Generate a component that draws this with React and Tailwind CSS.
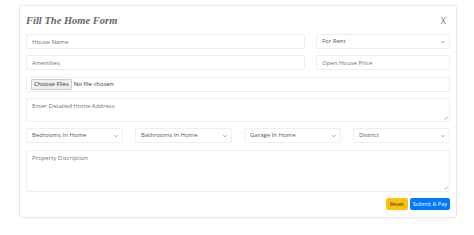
import React from 'react';

const fieldCls = 'h-[15px] w-full rounded-[2px] border border-[#eceef1] bg-white px-[5px] text-[6px] text-[#555] placeholder:text-[#6c757d] outline-none';

const Chevron = () => (
    <svg width="4" height="3" viewBox="0 0 10 6" fill="none" className="absolute right-[5px] top-1/2 -translate-y-1/2">
        <polyline points="1,1 5,5 9,1" stroke="#777" strokeWidth="1.6" strokeLinecap="round" strokeLinejoin="round"/>
    </svg>
);

const Grip = () => (
    <svg width="4" height="4" viewBox="0 0 8 8" className="absolute bottom-[2px] right-[2px]">
        <line x1="7" y1="1" x2="1" y2="7" stroke="#888" strokeWidth="1"/>
        <line x1="7" y1="4" x2="4" y2="7" stroke="#888" strokeWidth="1"/>
    </svg>
);

function Select({ label }) {
    return (
        <div className="relative">
            <div className="flex h-[15px] items-center rounded-[2px] border border-[#eceef1] bg-white px-[5px] text-[6px] text-[#555]">
                {label}
            </div>
            <Chevron />
        </div>
    );
}

function Area({ placeholder, h }) {
    return (
        <div className="relative">
            <textarea
                className={`${h} block w-full resize-none rounded-[2px] border border-[#eceef1] px-[5px] py-[3px] text-[6px] leading-[8px] placeholder:text-[#6c757d] outline-none`}
                placeholder={placeholder}
            />
            <Grip />
        </div>
    );
}

export default function App() {
    return (
        <div className="h-[235px] w-[474px] bg-white pt-[5px] pl-[19px]" style={{ fontFamily: '"Open Sans", "Noto Sans", sans-serif' }}>
            <div className="w-[438px] h-[213px] rounded-[3px] border border-[#e8e8e8] shadow-[0_0_2px_rgba(0,0,0,0.05)] px-[6px]">

                {/* header */}
                <div className="flex h-[28px] items-center justify-between pt-[1px]">
                    <h2 className="text-[10.5px] italic font-semibold text-[#666]" style={{ fontFamily: '"Liberation Serif", serif' }}>
                        Fill The Home Form
                    </h2>
                    <span className="mr-[4px] text-[9px] text-[#777]">X</span>
                </div>

                <div className="flex flex-col">
                    <div className="grid grid-cols-[1fr_134px] gap-[11px]">
                        <input className={fieldCls} placeholder="House Name" />
                        <Select label="For Rent" />
                    </div>

                    <div className="mt-[6px] grid grid-cols-[1fr_134px] gap-[11px]">
                        <input className={fieldCls} placeholder="Amenities" />
                        <input className={fieldCls} placeholder="Open House Price" />
                    </div>

                    <div className="mt-[7px] flex h-[15px] items-center gap-[2px] rounded-[2px] border border-[#eceef1] px-[4px] text-[6px] text-[#333]">
                        <span className="rounded-[1px] border border-[#ccc] bg-[#efefef] px-[2px] leading-[9px]">Choose Files</span>
                        <span>No file chosen</span>
                    </div>

                    <div className="mt-[6px]">
                        <Area placeholder="Enter Detailed Home Address" h="h-[24px]" />
                    </div>

                    <div className="mt-[6px] grid grid-cols-4 gap-[12px]">
                        <Select label="Bedrooms In Home" />
                        <Select label="Bathrooms In Home" />
                        <Select label="Garage In Home" />
                        <Select label="District" />
                    </div>

                    <div className="mt-[7px]">
                        <Area placeholder="Property Discription" h="h-[42px]" />
                    </div>

                    <div className="mt-[6px] flex justify-end gap-[2px]">
                        <button type="button" className="h-[12px] rounded-[2px] bg-[#ffc107] px-[4px] text-[5.5px] text-[#333]">Reset</button>
                        <button type="button" className="h-[12px] rounded-[2px] bg-[#007bff] px-[3px] text-[5.5px] text-white">Submit &amp; Pay</button>
                    </div>
                </div>
            </div>
        </div>
    );
}
